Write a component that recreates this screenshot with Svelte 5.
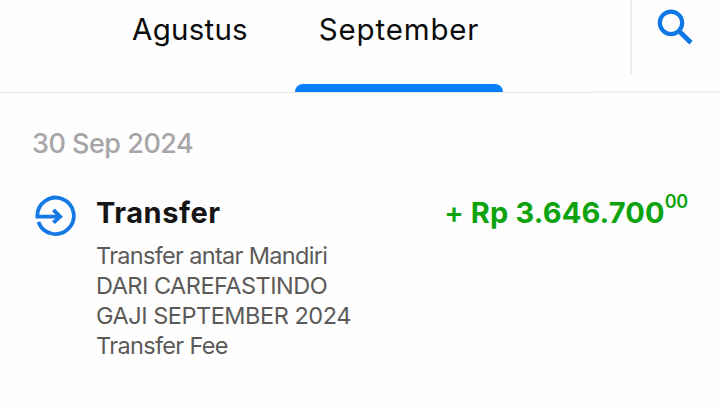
<script>
    const date = '30 Sep 2024';
    const details = [
        { text: 'Transfer antar Mandiri', spacing: -0.68 },
        { text: 'DARI CAREFASTINDO', spacing: -0.5 },
        { text: 'GAJI SEPTEMBER 2024', spacing: -0.47 },
        { text: 'Transfer Fee', spacing: -0.65 }
    ];
</script>

<main>
    <header>
        <nav>
            <button class="tab">Agustus</button>
            <button class="tab active">September</button>
        </nav>
        <div class="tools">
            <button class="search" aria-label="Search">
                <svg width="38" height="38" viewBox="0 0 38 38" fill="none" stroke="#0f78e6">
                    <circle cx="14" cy="14.8" r="11.2" stroke-width="4.2" />
                    <path d="M23 24 L34 34.8" stroke-width="4.8" />
                </svg>
            </button>
        </div>
    </header>

    <section>
        <h2>{date}</h2>
        <article>
            <svg class="icon" width="42" height="42" viewBox="0 0 42 42" fill="none" stroke="#1479e6" stroke-width="3.8">
                <path d="M25 21.6 H2.4 A18.2 18.2 0 1 1 3.4 26.8" />
                <path d="M18.4 14.9 L25.2 21.6 L18.4 27.7" />
            </svg>
            <div class="info">
                <h3>Transfer</h3>
                {#each details as line}
                    <p style="letter-spacing: {line.spacing}px">{line.text}</p>
                {/each}
            </div>
            <div class="amount"><span class="plus">+</span><span class="value">Rp 3.646.700</span><span class="cents">00</span></div>
        </article>
    </section>
</main>

<style>
    :global(body) {
        background: #fff;
    }
    main {
        width: 720px;
        height: 411px;
        overflow: hidden;
        background: #fefefe;
        font-family: Inter, sans-serif;
    }
    header {
        display: flex;
        height: 93px;
    }
    button {
        margin: 0;
        padding: 0;
        border: 0;
        background: none;
        font: inherit;
    }
    nav {
        display: flex;
        box-sizing: border-box;
        width: 590px;
        padding-left: 86px;
        border-bottom: 1px solid #e6e6e6;
    }
    .tab {
        display: flex;
        flex-direction: column;
        justify-content: space-between;
        align-items: center;
        width: 208px;
        height: 92px;
        padding-top: 12px;
        color: #0b0b0b;
        font-size: 29.5px;
        line-height: 35px;
        letter-spacing: 0.25px;
        white-space: nowrap;
    }
    .tab.active {
        margin-left: 1px;
        letter-spacing: 0.85px;
    }
    .tab.active::after {
        content: '';
        width: 208px;
        height: 8px;
        border-radius: 8px 8px 0 0;
        background: #057ffa;
    }
    .tools {
        display: flex;
        box-sizing: border-box;
        flex: 1;
        padding-left: 40px;
        border-bottom: 2px solid #ededed;
    }
    .search {
        display: flex;
        align-items: flex-start;
        height: 74px;
        padding: 8px 0 0 25px;
        border-left: 2px solid #ebebeb;
    }
    section {
        padding: 34px 32px 0;
    }
    h2, h3, p {
        margin: 0;
    }
    h2 {
        color: #a8a5a9;
        font-size: 27px;
        font-weight: 500;
        line-height: 33px;
        letter-spacing: -0.5px;
    }
    article {
        display: flex;
        margin-top: 35px;
    }
    .icon {
        margin-left: 3px;
    }
    .info {
        flex: 1;
        margin-left: 19px;
    }
    h3 {
        margin-bottom: 10px;
        color: #151515;
        font-size: 29px;
        font-weight: 700;
        line-height: 36px;
        letter-spacing: 0.55px;
    }
    p {
        color: #5c5a59;
        font-size: 23.5px;
        line-height: 30px;
        white-space: nowrap;
    }
    .amount {
        display: flex;
        color: #0ca30f;
        font-size: 29px;
        font-weight: 700;
        line-height: 36px;
        white-space: nowrap;
    }
    .value {
        letter-spacing: 0.15px;
    }
    .plus {
        margin-right: 7px;
        font-size: 29px;
        font-weight: 600;
    }
    .cents {
        font-size: 18px;
        font-weight: 600;
        line-height: 14px;
        letter-spacing: -0.2px;
    }
</style>
